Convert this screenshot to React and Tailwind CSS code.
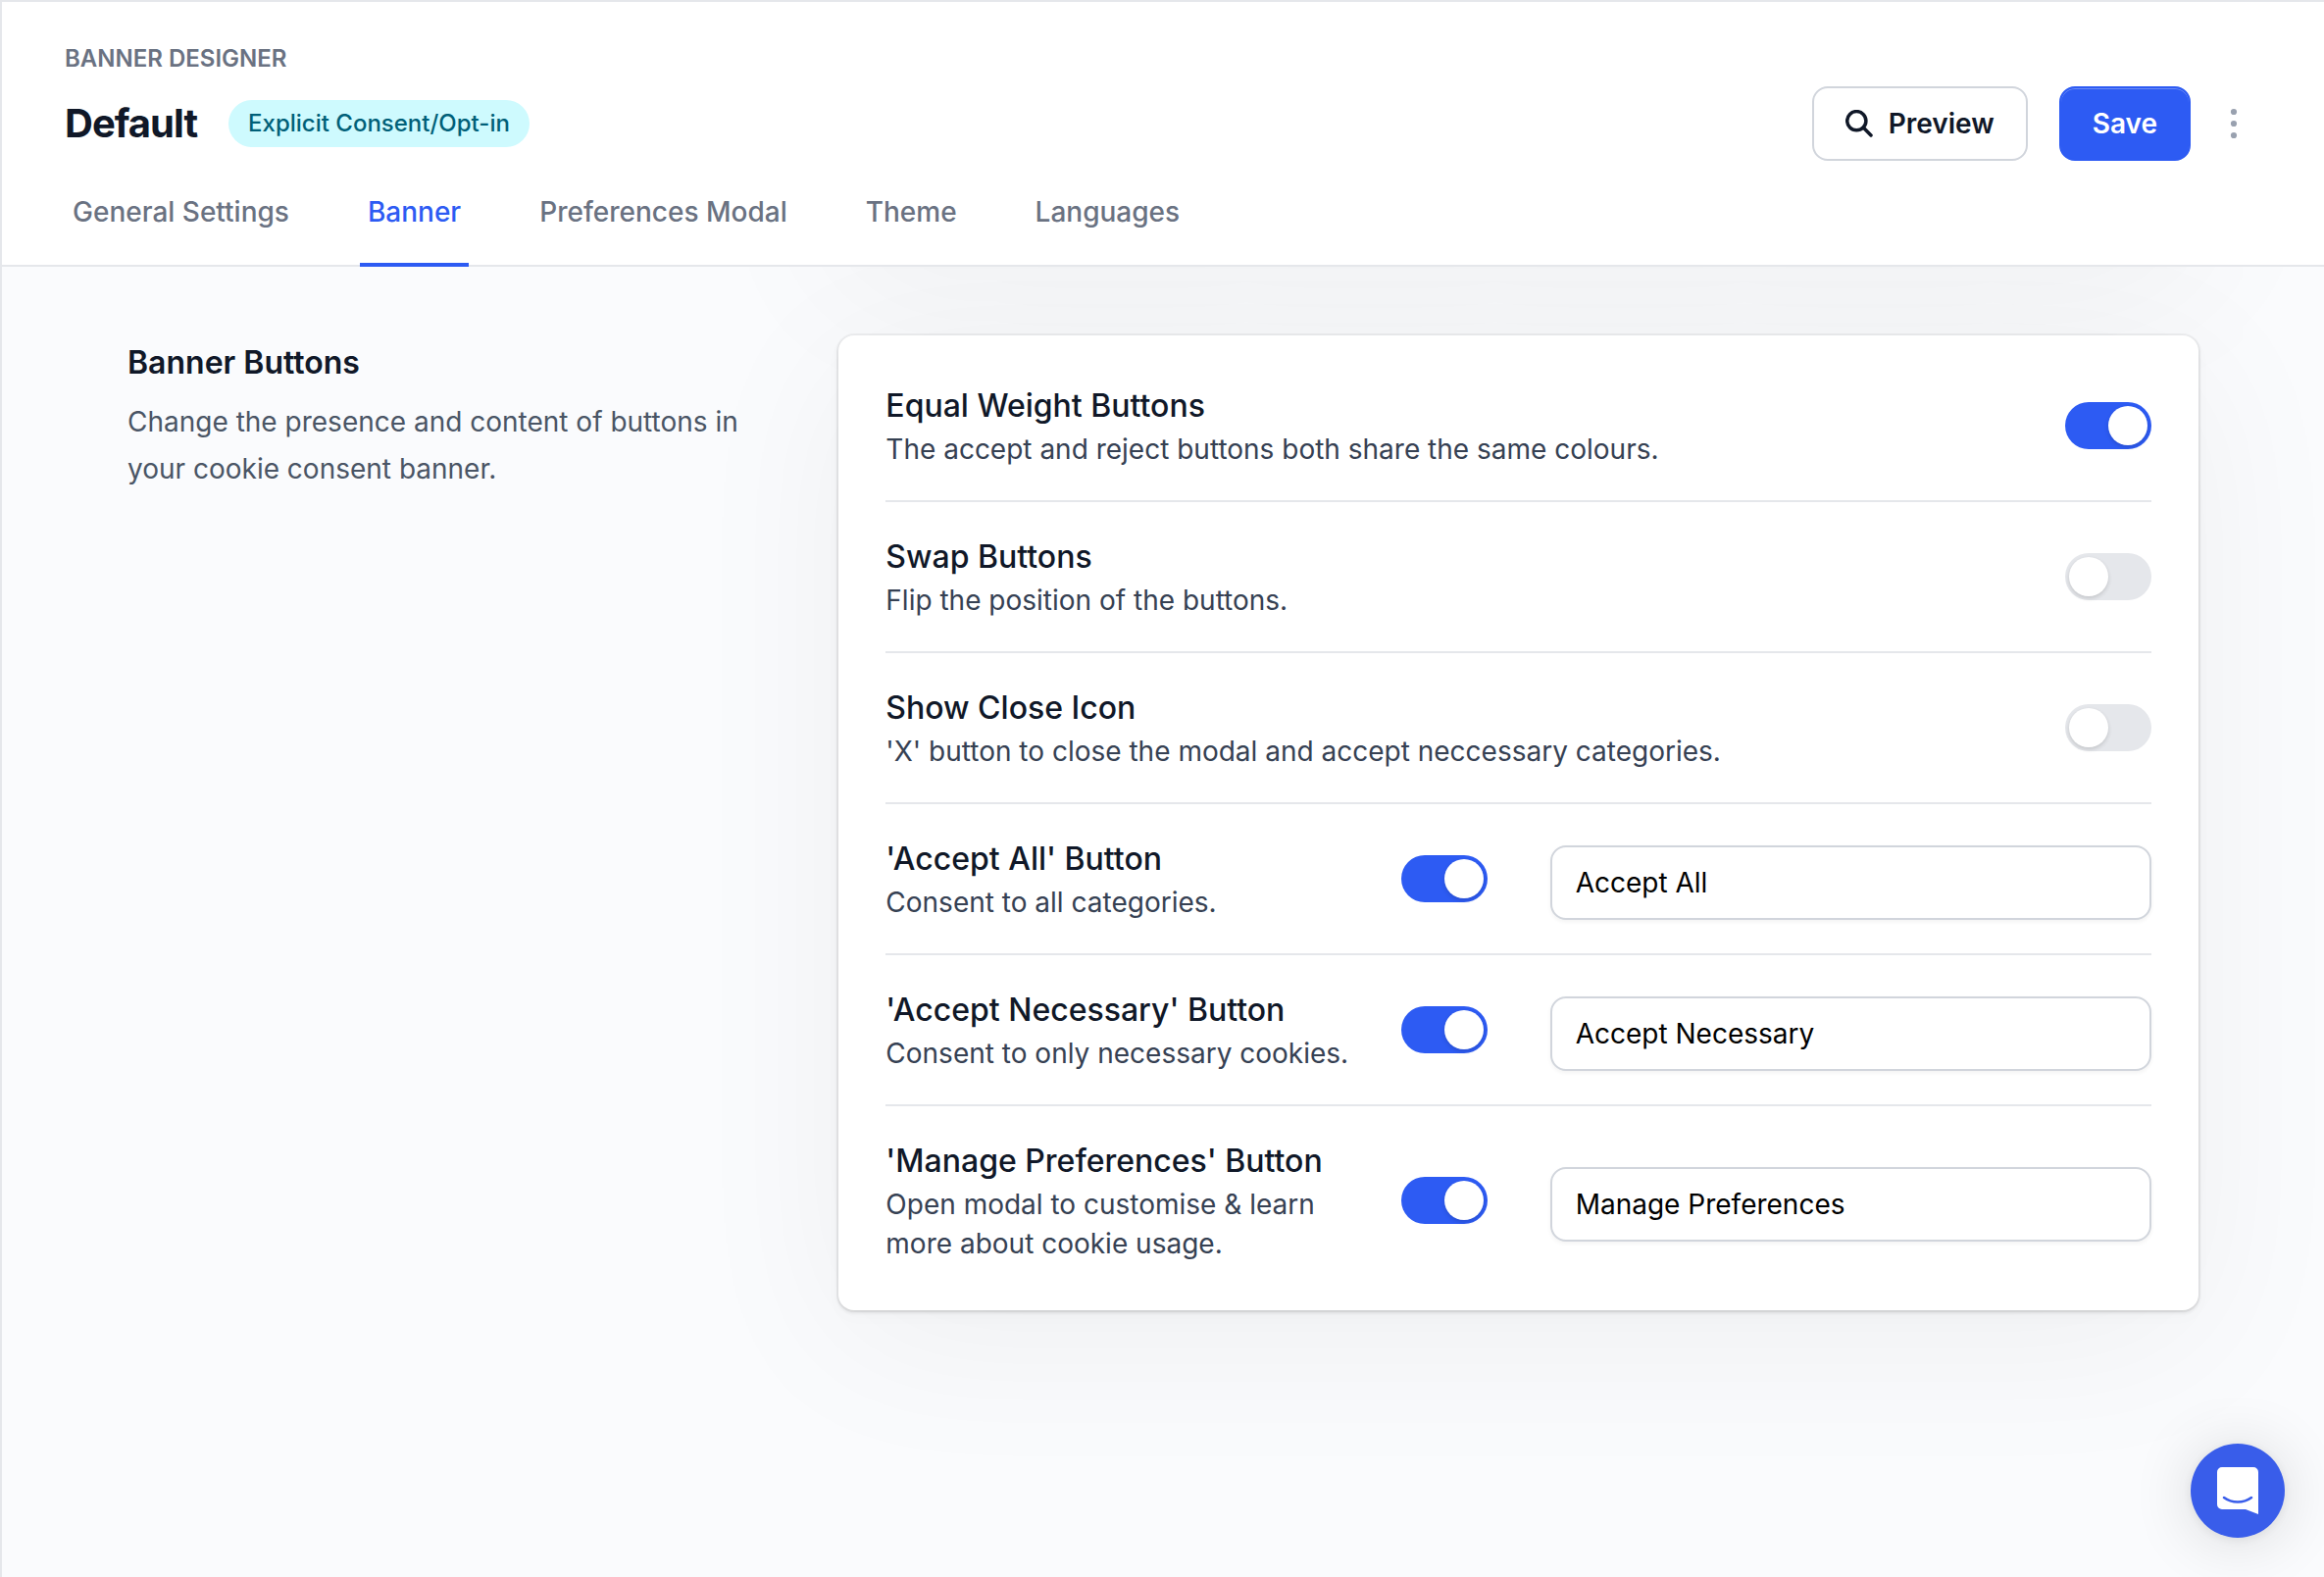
import { useState } from 'react'

const TABS = ['General Settings', 'Banner', 'Preferences Modal', 'Theme', 'Languages']

const OPTIONS = [
  { id: 'equal', title: 'Equal Weight Buttons', text: 'The accept and reject buttons both share the same colours.', on: true },
  { id: 'swap', title: 'Swap Buttons', text: 'Flip the position of the buttons.', on: false },
  { id: 'close', title: 'Show Close Icon', text: "'X' button to close the modal and accept neccessary categories.", on: false },
  { id: 'accept', title: "'Accept All' Button", text: 'Consent to all categories.', on: true, label: 'Accept All' },
  { id: 'necessary', title: "'Accept Necessary' Button", text: 'Consent to only necessary cookies.', on: true, label: 'Accept Necessary' },
  { id: 'manage', title: "'Manage Preferences' Button", text: 'Open modal to customise & learn more about cookie usage.', on: true, label: 'Manage Preferences' },
]

function Card({ children }) {
  return (
    <div className="rounded-2xl bg-white px-12 py-4 shadow-[0_0_0_2px_rgba(0,0,0,0.04),0_2px_4px_rgba(0,0,0,0.12),0_6px_20px_rgba(0,0,0,0.02),0_30px_170px_rgba(0,0,0,0.05)]">
      {children}
    </div>
  )
}

function Toggle({ id, checked, onChange }) {
  return (
    <input
      id={id}
      type="checkbox"
      checked={checked}
      onChange={onChange}
      className="h-12 w-22 shrink-0 cursor-pointer appearance-none rounded-full bg-gray-200 p-1 before:block before:size-10 before:rounded-full before:bg-white before:shadow-[0_2px_4px_rgba(0,0,0,0.15)] checked:bg-[#2d5bf3] checked:before:translate-x-10"
    />
  )
}

function OptionRow({ option }) {
  const [on, setOn] = useState(option.on)
  const [value, setValue] = useState(option.label || '')

  const main = (
    <div className="flex items-center justify-between gap-8">
      <div>
        <label htmlFor={option.id} className="block text-[32px] leading-12 font-medium text-gray-900">{option.title}</label>
        <p className="text-[28px] leading-10 text-gray-700">{option.text}</p>
      </div>
      <Toggle id={option.id} checked={on} onChange={e => setOn(e.target.checked)} />
    </div>
  )

  if (!option.label) return <div className="py-8">{main}</div>

  return (
    <div className="grid grid-cols-2 items-center gap-16 py-8">
      {main}
      <div className="-my-2 pt-2">
        <input
          type="text"
          aria-label={option.title}
          value={value}
          onChange={e => setValue(e.target.value)}
          className="block w-full rounded-2xl border-2 border-gray-300 bg-white px-6 py-4 text-[28px] leading-10 text-black shadow-[0_2px_4px_rgba(0,0,0,0.05)]"
        />
      </div>
    </div>
  )
}

function Header() {
  const [tab, setTab] = useState('Banner')
  return (
    <header className="relative z-10 border-b-2 border-gray-200 bg-white px-16 pt-[42px]">
      <p className="text-2xl font-semibold text-gray-500 uppercase">Banner Designer</p>
      <div className="mt-3 flex items-center justify-between">
        <div className="flex items-center gap-8">
          <h1 className="text-[40px] leading-12 font-bold tracking-tight text-gray-900">Default</h1>
          <span className="rounded-full bg-cyan-100 px-5 py-2 text-2xl font-medium text-cyan-800">Explicit Consent/Opt-in</span>
        </div>
        <div className="flex items-center">
          <button className="flex items-center gap-4 rounded-2xl border-2 border-gray-300 bg-white px-8 py-4 text-[28px] leading-10 font-semibold text-gray-900">
            <svg viewBox="0 0 28 28" className="size-7" fill="none" stroke="currentColor" strokeWidth="3.5" strokeLinecap="round">
              <circle cx="11.3" cy="11.2" r="9.6" />
              <path d="M18.2 18.1l7.8 7.8" />
            </svg>
            Preview
          </button>
          <button className="ml-8 rounded-2xl border-2 border-[#2d5bf3] bg-[#2d5bf3] px-8 py-4 text-[28px] leading-10 font-semibold text-white shadow-[inset_0_1px_0_rgba(255,255,255,0.3)]">
            Save
          </button>
          <button aria-label="More options" className="ml-4 flex w-14 justify-center text-gray-400">
            <svg viewBox="0 0 8 32" className="h-8 w-2" fill="currentColor">
              <circle cx="4" cy="4" r="3.1" />
              <circle cx="4" cy="16" r="3.1" />
              <circle cx="4" cy="28" r="3.1" />
            </svg>
          </button>
        </div>
      </div>
      <nav className="mt-8 -mb-0.5 flex gap-16">
        {TABS.map(name => (
          <button key={name} onClick={() => setTab(name)} className={`border-b-4 px-2 pb-8 text-[28px] leading-10 font-medium ${tab === name ? 'border-[#2d5bf3] text-[#2d5bf3]' : 'border-transparent text-gray-500'}`}>
            {name}
          </button>
        ))}
      </nav>
    </header>
  )
}

export default function App() {
  return (
    <div className="relative flex min-h-screen flex-col overflow-hidden border-t-2 border-l-2 border-gray-200 bg-white font-['Inter',sans-serif]">
      <Header />
      <main className="grid flex-1 grid-cols-3 content-start gap-x-16 gap-y-[70px] bg-[#fafbfd] px-32">
        {/* end of the section that is scrolled under the header */}
        <div className="col-span-2 col-start-2 -mt-92">
          <Card>
            <div className="h-81" />
          </Card>
        </div>
        <div>
          <h2 className="text-[32px] leading-14 font-semibold text-gray-900">Banner Buttons</h2>
          <p className="mt-2 text-[28px] leading-12 text-gray-600">Change the presence and content of buttons in your cookie consent banner.</p>
        </div>
        <div className="col-span-2">
          <Card>
            <div className="divide-y-2 divide-gray-200">
              {OPTIONS.map(option => <OptionRow key={option.id} option={option} />)}
            </div>
          </Card>
        </div>
      </main>
      <button aria-label="Open chat" className="fixed right-10 bottom-10 z-20 flex size-24 items-center justify-center rounded-full bg-[#395dea] text-white shadow-[0_2px_12px_rgba(0,0,0,0.08),0_4px_64px_rgba(0,0,0,0.14)]">
        <svg viewBox="0 0 42 48" className="h-12 w-[42px]">
          <path d="M5 0h32a5 5 0 0 1 5 5v43l-13-5H5a5 5 0 0 1-5-5V5a5 5 0 0 1 5-5z" fill="currentColor" />
          <path d="M7 31c8 6 20 6 28 0" fill="none" stroke="#395dea" strokeWidth="2.6" strokeLinecap="round" />
        </svg>
      </button>
    </div>
  )
}
